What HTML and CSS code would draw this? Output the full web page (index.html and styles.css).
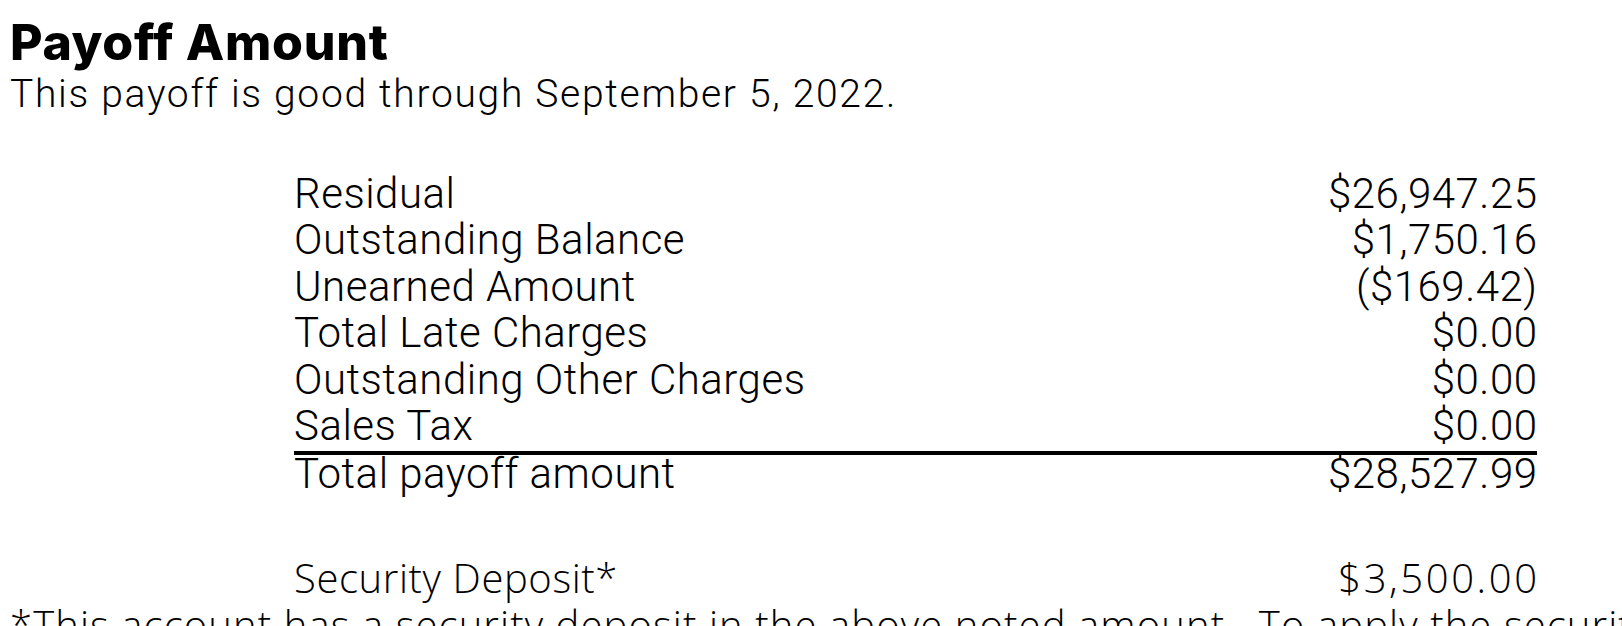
FILE: index.html
```html
<!DOCTYPE html>
<html lang="en">
<head>
<meta charset="utf-8">
<title>Payoff Amount</title>
<link rel="stylesheet" href="styles.css">
</head>
<body>
<main class="page">
  <h1 class="title">Payoff Amount</h1>
  <p class="subtitle">This payoff is good through September 5, 2022.</p>

  <div class="ledger">
    <div class="row"><span class="label">Residual</span><span class="amount">$26,947.25</span></div>
    <div class="row"><span class="label">Outstanding Balance</span><span class="amount">$1,750.16</span></div>
    <div class="row"><span class="label">Unearned Amount</span><span class="amount">($169.42)</span></div>
    <div class="row"><span class="label">Total Late Charges</span><span class="amount">$0.00</span></div>
    <div class="row"><span class="label">Outstanding Other Charges</span><span class="amount">$0.00</span></div>
    <div class="row row-last"><span class="label">Sales Tax</span><span class="amount">$0.00</span></div>
    <div class="row row-total"><span class="label">Total payoff amount</span><span class="amount">$28,527.99</span></div>
    <div class="row row-deposit"><span class="label">Security Deposit*</span><span class="amount">$3,500.00</span></div>
  </div>

  <p class="footnote">*This account has a security deposit in the above noted amount.&nbsp; To apply the security deposit to the payoff, please contact us.</p>
</main>
</body>
</html>
```
FILE: styles.css
```css
html, body {
  margin: 0;
  padding: 0;
  background: #ffffff;
  color: #000000;
  overflow: hidden;
}

.page {
  padding: 17px 10px 0;
  font-family: Roboto, "Liberation Sans", sans-serif;
}

.title {
  margin: 0;
  font-family: Inter, "Liberation Sans", sans-serif;
  font-weight: 800;
  font-size: 50px;
  line-height: 50px;
  letter-spacing: 0.7px;
}

.subtitle {
  margin: 0;
  font-weight: 300;
  font-size: 39px;
  line-height: 55px;
  letter-spacing: 1.7px;
  white-space: nowrap;
}

.ledger {
  margin: 49px 0 0 284px;
  width: 1243px;
  display: flex;
  flex-direction: column;
}

.row {
  display: flex;
  justify-content: space-between;
  font-weight: 300;
  font-size: 42px;
  line-height: 46.4px;
  letter-spacing: 0.5px;
}

.amount {
  margin-right: -0.5px;
}

.row-last {
  padding-bottom: 2px;
  border-bottom: 4px solid #000;
}

.row-total {
  line-height: 37px;
}

.row-deposit {
  margin-top: 64px;
  font-family: "Open Sans", "Liberation Sans", sans-serif;
  font-weight: 300;
  font-size: 40px;
  line-height: 44px;
  letter-spacing: 0.6px;
}

.row-deposit .amount {
  letter-spacing: 2.6px;
  margin-right: -2.6px;
}

.footnote {
  margin: 2px 0 0;
  font-family: "Open Sans", "Liberation Sans", sans-serif;
  font-weight: 300;
  font-size: 40px;
  line-height: 46px;
  letter-spacing: 1.1px;
  white-space: nowrap;
}
```
